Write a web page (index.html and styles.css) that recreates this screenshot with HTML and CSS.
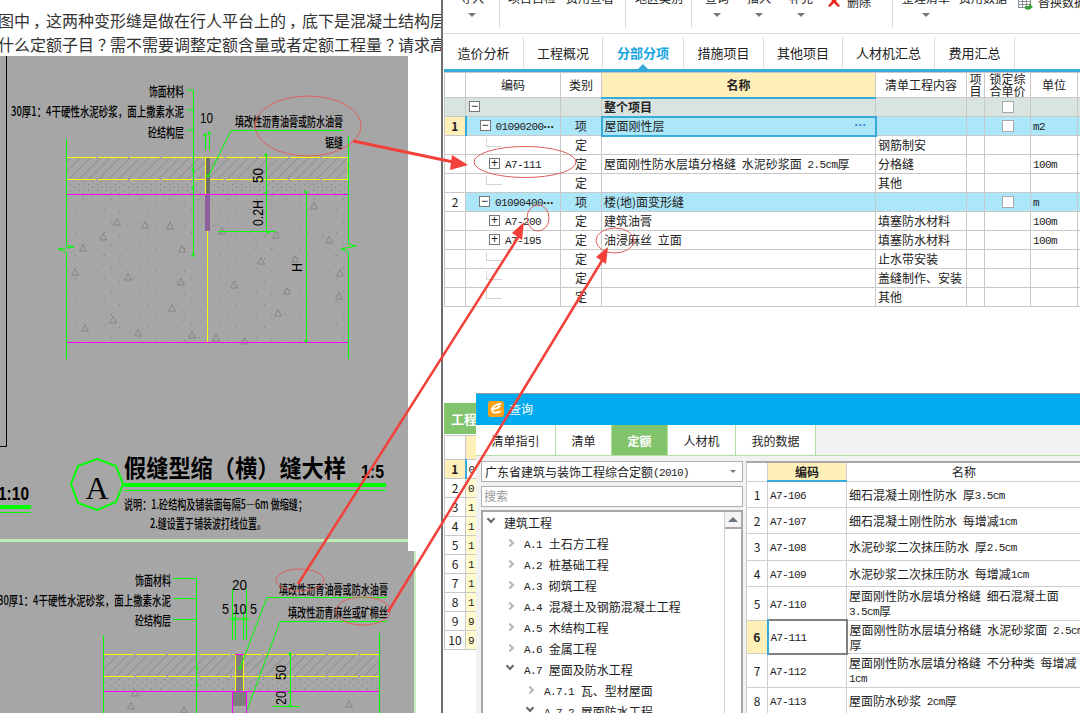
FILE: index.html
```html
<!DOCTYPE html>
<html lang="zh">
<head>
<meta charset="utf-8">
<title>查询</title>
<link rel="stylesheet" href="styles.css">
</head>
<body>
<div class="stage">

  <section class="doc">
    <p class="doc-line">图中<span class="p">，</span>这两种变形缝是做在行人平台上的<span class="p">，</span>底下是混凝土结构层</p>
    <p class="doc-line">什么定额子目<span class="p">？</span>需不需要调整定额含量或者定额工程量<span class="p">？</span>请求高</p>
    <svg class="cad" viewBox="0 56 416 657" width="416" height="657" xmlns="http://www.w3.org/2000/svg">
      <defs>
        <pattern id="hatch" width="7" height="7" patternUnits="userSpaceOnUse" patternTransform="rotate(45)">
          <line x1="0" y1="0" x2="0" y2="7" stroke="#707070" stroke-width="0.8"/>
        </pattern>
        <pattern id="dots" width="29" height="23" patternUnits="userSpaceOnUse">
          <rect x="3" y="5" width="1" height="1" fill="#808080"/>
          <rect x="17" y="2" width="1" height="1" fill="#808080"/>
          <rect x="24" y="15" width="1" height="1" fill="#808080"/>
          <rect x="10" y="18" width="1" height="1" fill="#808080"/>
        </pattern>
        <pattern id="fine" width="9" height="6" patternUnits="userSpaceOnUse">
          <rect x="2" y="1" width="1" height="1" fill="#808080"/>
          <rect x="7" y="4" width="1" height="1" fill="#808080"/>
        </pattern>
        <path id="tri" d="M0 -3.500 L3.500 3 L-3.500 3 Z" fill="none" stroke="#7d7d7d" stroke-width="0.8"/>
      </defs>

      <rect class="cad-bg" x="0" y="56" width="408" height="495"/>
      <rect class="cad-bg" x="0" y="551" width="415" height="162"/>
      <rect x="414" y="551" width="2" height="162" fill="#c4f0c0"/>
      <rect x="0" y="539" width="408" height="3" fill="#bdeeb8"/>
      <path d="M6.500 56 V446.500 H0" fill="none" stroke="#000" stroke-width="1"/>

      <!-- upper detail -->
      <rect x="66" y="158" width="282" height="22" fill="url(#hatch)"/>
      <rect x="66" y="180" width="282" height="14" fill="url(#fine)"/>
      <rect x="67" y="195" width="281" height="147" fill="url(#dots)"/>
      <use href="#tri" x="117" y="222"/><use href="#tri" x="145" y="225"/><use href="#tri" x="170" y="226"/>
      <use href="#tri" x="103" y="237"/><use href="#tri" x="83" y="248"/><use href="#tri" x="182" y="249"/>
      <use href="#tri" x="75" y="272"/><use href="#tri" x="128" y="277"/><use href="#tri" x="181" y="282"/>
      <use href="#tri" x="113" y="320"/><use href="#tri" x="85" y="328"/><use href="#tri" x="138" y="333"/>
      <use href="#tri" x="192" y="335"/><use href="#tri" x="172" y="308"/><use href="#tri" x="234" y="285"/>
      <use href="#tri" x="261" y="261"/><use href="#tri" x="287" y="291"/><use href="#tri" x="278" y="313"/>
      <use href="#tri" x="314" y="206"/><use href="#tri" x="329" y="240"/><use href="#tri" x="340" y="273"/>
      <use href="#tri" x="339" y="296"/><use href="#tri" x="276" y="235"/><use href="#tri" x="222" y="231"/>
      <use href="#tri" x="216" y="338"/><use href="#tri" x="245" y="341"/><use href="#tri" x="295" y="259"/>

      <g class="y">
        <line x1="66" y1="157.500" x2="348" y2="157.500" stroke-dasharray="30 2"/>
        <line x1="66" y1="179.500" x2="348" y2="179.500" stroke-dasharray="30 2"/>
        <line x1="348" y1="157" x2="348" y2="180" stroke-dasharray="6 2"/>
        <line x1="207.500" y1="231" x2="207.500" y2="342"/>
        <line x1="205.500" y1="157" x2="205.500" y2="194"/>
      </g>
      <rect x="206" y="158" width="4" height="36" fill="#6f6f6f"/>
      <rect x="205" y="195" width="5" height="36" fill="#8d5f9c"/>
      <g class="m">
        <line x1="67" y1="194.500" x2="348" y2="194.500"/>
        <line x1="66" y1="342.500" x2="348" y2="342.500"/>
      </g>
      <g class="g">
        <path d="M193.500 90 V255 M187 90 H193 M187 110 H193 M187 130 H193"/>
        <path d="M66.500 139 V245 L74 247 L58 249 L66.500 252 V359"/>
        <path d="M348.500 136 V244 L356 246 L341 249 L348.500 252 V359"/>
        <path d="M205.500 135 V150 M209.500 135 V150"/>
        <path d="M208 177 L231 130.500 H342"/>
        <path d="M266.500 155 V232 M218 231.500 H276 M306.500 192 V342"/>
      </g>
      <g class="gf">
        <circle cx="193" cy="255" r="1.500"/><circle cx="193" cy="170" r="1.500"/><circle cx="193" cy="188" r="1.500"/>
        <circle cx="208" cy="176" r="1.500"/><circle cx="266" cy="155" r="1.500"/><circle cx="266" cy="193" r="1.500"/>
        <circle cx="306" cy="192" r="1.500"/><circle cx="306" cy="341" r="1.500"/><circle cx="268" cy="232" r="1.500"/>
        <circle cx="205" cy="135" r="1.500"/><circle cx="209" cy="133" r="1.500"/>
      </g>
      <g class="cad-t">
        <text x="149" y="96" textLength="35" lengthAdjust="spacingAndGlyphs">饰面材料</text>
        <text x="11" y="116" textLength="173" lengthAdjust="spacingAndGlyphs">30厚1：4干硬性水泥砂浆，面上撒素水泥</text>
        <text x="148" y="137" textLength="36" lengthAdjust="spacingAndGlyphs">砼结构层</text>
        <text x="200" y="123" textLength="13" lengthAdjust="spacingAndGlyphs" class="num">10</text>
        <text x="235" y="126" textLength="108" lengthAdjust="spacingAndGlyphs">填改性沥青油膏或防水油膏</text>
        <text x="325" y="147" textLength="18" lengthAdjust="spacingAndGlyphs">锯缝</text>
        <text x="0" y="0" transform="translate(263,183) rotate(-90)" textLength="15" lengthAdjust="spacingAndGlyphs" class="num">50</text>
        <text x="0" y="0" transform="translate(263,226) rotate(-90)" textLength="26" lengthAdjust="spacingAndGlyphs" class="num">0.2H</text>
        <text x="0" y="0" transform="translate(302,272) rotate(-90)" textLength="9" lengthAdjust="spacingAndGlyphs" class="num">H</text>
      </g>

      <!-- title -->
      <polygon class="hept" points="97,459 116,466 123,484 116,502 97,510 78,503 71,484 78,466"/>
      <text x="97" y="499" class="letter">A</text>
      <text x="124" y="477" textLength="222" lengthAdjust="spacingAndGlyphs" class="title">假缝型缩（横）缝大样</text>
      <text x="361" y="478" textLength="23" lengthAdjust="spacingAndGlyphs" class="scale">1:5</text>
      <text x="-2" y="500" textLength="31" lengthAdjust="spacingAndGlyphs" class="scale">1:10</text>
      <rect x="124" y="483" width="262" height="4" fill="#00ff00"/>
      <rect x="124" y="490" width="262" height="1" fill="#00ff00"/>
      <rect x="0" y="505" width="31" height="4" fill="#00ff00"/>
      <rect x="0" y="512" width="31" height="1" fill="#00ff00"/>
      <g class="cad-t">
        <text x="124" y="509" textLength="183" lengthAdjust="spacingAndGlyphs">说明：1.砼结构及铺装面每隔5—6m 做缩缝；</text>
        <text x="150" y="528" textLength="116" lengthAdjust="spacingAndGlyphs">2.缝设置于铺装波打线位置。</text>
      </g>

      <!-- lower detail -->
      <rect x="104" y="655" width="276" height="21" fill="url(#hatch)"/>
      <rect x="104" y="677" width="276" height="14" fill="url(#fine)"/>
      <use href="#tri" x="131" y="706"/><use href="#tri" x="184" y="710"/><use href="#tri" x="349" y="704"/><use href="#tri" x="135" y="693"/>
      <rect x="236" y="655" width="7" height="36" fill="#7f7f7f"/>
      <rect x="233" y="692" width="13" height="14" fill="#7f7f7f"/>
      <g class="y">
        <line x1="104" y1="654.500" x2="380" y2="654.500" stroke-dasharray="30 2"/>
        <line x1="104" y1="676.500" x2="380" y2="676.500" stroke-dasharray="30 2"/>
        <line x1="235.500" y1="655" x2="235.500" y2="691"/>
        <line x1="243.500" y1="655" x2="243.500" y2="691"/>
      </g>
      <g class="m">
        <line x1="104" y1="691.500" x2="380" y2="691.500"/>
        <line x1="235" y1="654.500" x2="244" y2="654.500"/>
        <line x1="232.500" y1="691" x2="232.500" y2="713"/>
        <line x1="246.500" y1="691" x2="246.500" y2="713"/>
      </g>
      <g class="g">
        <path d="M173 578.500 H196.500 V713 M173 598.500 H196.500 M173 619.500 H196.500"/>
        <path d="M103.500 635 V713 M379.500 633 V713"/>
        <path d="M232.500 589 V640 M235.500 611 V640 M243.500 611 V640 M246.500 589 V640 M229 619 H250"/>
        <path d="M240 668 L267 597.500 H387"/>
        <path d="M247 710 L280 621.500 H387"/>
        <path d="M290.500 653 V706 M273 706.500 H300"/>
      </g>
      <g class="gf">
        <circle cx="197" cy="668" r="1.500"/><circle cx="197" cy="685" r="1.500"/><circle cx="240" cy="668" r="1.500"/>
        <circle cx="290" cy="654" r="1.500"/><circle cx="290" cy="692" r="1.500"/><circle cx="290" cy="706" r="1.500"/>
        <circle cx="234" cy="619" r="1.500"/><circle cx="244" cy="619" r="1.500"/>
      </g>
      <g class="cad-t">
        <text x="135" y="585" textLength="36" lengthAdjust="spacingAndGlyphs">饰面材料</text>
        <text x="-2" y="605" textLength="173" lengthAdjust="spacingAndGlyphs">30厚1：4干硬性水泥砂浆，面上撒素水泥</text>
        <text x="135" y="625" textLength="36" lengthAdjust="spacingAndGlyphs">砼结构层</text>
        <text x="279" y="594" textLength="109" lengthAdjust="spacingAndGlyphs">填改性沥青油膏或防水油膏</text>
        <text x="288" y="617" textLength="100" lengthAdjust="spacingAndGlyphs">填改性沥青麻丝或矿棉丝</text>
        <text x="232" y="590" textLength="15" lengthAdjust="spacingAndGlyphs" class="num">20</text>
        <text x="222" y="614" textLength="35" lengthAdjust="spacingAndGlyphs" class="num">5 10 5</text>
        <text x="0" y="0" transform="translate(286,680) rotate(-90)" textLength="15" lengthAdjust="spacingAndGlyphs" class="num">50</text>
        <text x="0" y="0" transform="translate(286,705) rotate(-90)" textLength="14" lengthAdjust="spacingAndGlyphs" class="num">20</text>
      </g>
    </svg>
  </section>

  <section class="app">
    <div class="toolbar">
      <div class="tgroup g1">
        <div class="tool"><span>导入</span><i class="caret"></i></div>
      </div>
      <div class="tgroup g2">
        <div class="tool"><span>项目自检</span></div>
        <div class="tool"><span>费用查看</span></div>
      </div>
      <div class="tgroup g3">
        <div class="tool"><span>地区类别</span></div>
      </div>
      <div class="tgroup g4">
        <div class="tool"><span>查询</span><i class="caret"></i></div>
        <div class="tool"><span>插入</span><i class="caret"></i></div>
        <div class="tool"><span>补充</span><i class="caret"></i></div>
        <div class="tool row">
          <svg class="ico-del" viewBox="0 0 12 12" width="12" height="12" xmlns="http://www.w3.org/2000/svg"><path d="M1 0 L6 4 L10 0 L12 1 L8 6 L12 11 L10 12 L6 8 L2 12 L0 11 L4 6 L0 1 Z" fill="#e8261c"/></svg>
          <span>删除</span>
        </div>
      </div>
      <div class="tgroup g5">
        <div class="tool"><span>整理清单</span><i class="caret"></i></div>
        <div class="tool"><span>费用数据</span></div>
        <div class="tool row">
          <svg class="ico-rep" viewBox="0 0 16 12" width="16" height="12" xmlns="http://www.w3.org/2000/svg"><path d="M0.500 0.500 H12.500 V9.500 H0.500 Z M0.500 3.500 H12.500 M0.500 6.500 H12.500 M4.500 0.500 V9.500 M8.500 0.500 V9.500" fill="#fff" stroke="#8a8f96"/><path d="M7 11 L7 8 L11 8 L11 5 L15 9 L11 12 Z" fill="#3da33a"/></svg>
          <span>替换数据</span>
        </div>
      </div>
    </div>

    <nav class="tabs">
      <a class="tab t1">造价分析</a>
      <a class="tab t2">工程概况</a>
      <a class="tab t3 on">分部分项</a>
      <a class="tab t4">措施项目</a>
      <a class="tab t5">其他项目</a>
      <a class="tab t6">人材机汇总</a>
      <a class="tab t7">费用汇总</a>
    </nav>

    <table class="grid">
      <colgroup>
        <col class="c-n"><col class="c-code"><col class="c-type"><col class="c-name"><col class="c-qd"><col class="c-xm"><col class="c-lock"><col class="c-unit"><col class="c-more">
      </colgroup>
      <thead>
        <tr class="hd">
          <th></th><th>编码</th><th>类别</th><th class="hl">名称</th><th>清单工程内容</th><th class="tiny">项目</th><th class="tiny">锁定综合单价</th><th>单位</th><th class="tiny"></th>
        </tr>
      </thead>
      <tbody>
        <tr class="total">
          <td></td><td class="code"><b class="box lv0">−</b></td><td></td><td class="bold">整个项目</td><td></td><td></td><td class="c"><i class="chk"></i></td><td></td><td></td>
        </tr>
        <tr class="sec">
          <td class="num cur">1</td><td class="code cursor"><b class="box lv1">−</b><span class="l">01090200</span><em class="dots">···</em></td><td class="c">项</td><td class="edit">屋面刚性层<em class="more">···</em></td><td></td><td></td><td class="c"><i class="chk"></i></td><td><span class="l">m2</span></td><td></td>
        </tr>
        <tr>
          <td></td><td class="code"><i class="tree"></i></td><td class="c">定</td><td></td><td>钢筋制安</td><td></td><td></td><td></td><td></td>
        </tr>
        <tr>
          <td></td><td class="code"><b class="box lv2">+</b><span class="l">A7-111</span></td><td class="c">定</td><td>屋面刚性防水层填分格缝 水泥砂浆面 <span class="l">2.5cm</span>厚</td><td>分格缝</td><td></td><td></td><td><span class="l">100m</span></td><td></td>
        </tr>
        <tr>
          <td></td><td class="code"><i class="tree"></i></td><td class="c">定</td><td></td><td>其他</td><td></td><td></td><td></td><td></td>
        </tr>
        <tr class="sec">
          <td class="num">2</td><td class="code"><b class="box lv1">−</b><span class="l">01090400</span><em class="dots">···</em></td><td class="c">项</td><td>楼(地)面变形缝</td><td></td><td></td><td class="c"><i class="chk"></i></td><td><span class="l">m</span></td><td></td>
        </tr>
        <tr>
          <td></td><td class="code"><b class="box lv2">+</b><span class="l">A7-200</span></td><td class="c">定</td><td>建筑油膏</td><td>填塞防水材料</td><td></td><td></td><td><span class="l">100m</span></td><td></td>
        </tr>
        <tr>
          <td></td><td class="code"><b class="box lv2">+</b><span class="l">A7-195</span></td><td class="c">定</td><td>油浸麻丝 立面</td><td>填塞防水材料</td><td></td><td></td><td><span class="l">100m</span></td><td></td>
        </tr>
        <tr>
          <td></td><td class="code"><i class="tree"></i></td><td class="c">定</td><td></td><td>止水带安装</td><td></td><td></td><td></td><td></td>
        </tr>
        <tr>
          <td></td><td class="code"><i class="tree"></i></td><td class="c">定</td><td></td><td>盖缝制作、安装</td><td></td><td></td><td></td><td></td>
        </tr>
        <tr>
          <td></td><td class="code"><i class="tree"></i></td><td class="c">定</td><td></td><td>其他</td><td></td><td></td><td></td><td></td>
        </tr>
      </tbody>
    </table>

    <div class="lower">
      <div class="lower-tab">工程</div>
      <table class="mini">
        <tr class="mini-h"><td></td><td class="y1"></td></tr>
        <tr><td class="num cur">1</td><td class="cursor2"><span class="l">0</span></td></tr>
        <tr><td>2</td><td class="y2"><span class="l">0</span></td></tr>
        <tr><td>3</td><td class="y2"><span class="l">1</span></td></tr>
        <tr><td>4</td><td class="y2"><span class="l">1</span></td></tr>
        <tr><td>5</td><td class="y2"><span class="l">1</span></td></tr>
        <tr><td>6</td><td class="y2"><span class="l">1:</span></td></tr>
        <tr><td>7</td><td class="y2"><span class="l">1:</span></td></tr>
        <tr><td>8</td><td class="y2"><span class="l">1:</span></td></tr>
        <tr><td>9</td><td class="y2"><span class="l">9!</span></td></tr>
        <tr><td>10</td><td class="y2"><span class="l">9!</span></td></tr>
      </table>
    </div>
  </section>

  <section class="dialog">
    <header class="dlg-title">
      <svg class="logo" viewBox="0 0 16 16" width="16" height="16" xmlns="http://www.w3.org/2000/svg"><rect width="16" height="16" rx="3" fill="#f9a11b"/><path d="M12.500 3 C8 3 4 6 4 9 C4 12 8 12.500 12 10.500 M6 8 C8 8 10 7 11.500 5.500" fill="none" stroke="#fff" stroke-width="1.800" stroke-linecap="round"/></svg>
      <span>查询</span>
    </header>
    <nav class="dtabs">
      <a class="dtab d1">清单指引</a>
      <a class="dtab d2">清单</a>
      <a class="dtab d3 on">定额</a>
      <a class="dtab d4">人材机</a>
      <a class="dtab d5">我的数据</a>
    </nav>
    <div class="dbody">
      <div class="dleft">
        <div class="combo"><span>广东省建筑与装饰工程综合定额<span class="l">(2010)</span></span><i class="caret sm"></i></div>
        <div class="search">搜索</div>
        <div class="treebox">
          <div class="scroll"><div class="scroll-up"><i></i></div></div>
          <ul class="ttree">
            <li class="l0"><i class="chev down"></i>建筑工程</li>
            <li class="l1"><i class="chev"></i><span class="l">A.1</span> 土石方工程</li>
            <li class="l1"><i class="chev"></i><span class="l">A.2</span> 桩基础工程</li>
            <li class="l1"><i class="chev"></i><span class="l">A.3</span> 砌筑工程</li>
            <li class="l1"><i class="chev"></i><span class="l">A.4</span> 混凝土及钢筋混凝土工程</li>
            <li class="l1"><i class="chev"></i><span class="l">A.5</span> 木结构工程</li>
            <li class="l1"><i class="chev"></i><span class="l">A.6</span> 金属工程</li>
            <li class="l1"><i class="chev down"></i><span class="l">A.7</span> 屋面及防水工程</li>
            <li class="l2"><i class="chev"></i><span class="l">A.7.1</span> 瓦、型材屋面</li>
            <li class="l2"><i class="chev down"></i><span class="l">A.7.2</span> 屋面防水工程</li>
          </ul>
        </div>
      </div>
      <table class="qtable">
        <colgroup><col class="q-n"><col class="q-code"><col></colgroup>
        <thead><tr class="q-h"><th></th><th class="hl">编码</th><th class="plain">名称</th></tr></thead>
        <tbody>
          <tr class="r26"><td class="c">1</td><td><span class="l">A7-106</span></td><td>细石混凝土刚性防水 厚<span class="l">3.5cm</span></td></tr>
          <tr class="r26"><td class="c">2</td><td><span class="l">A7-107</span></td><td>细石混凝土刚性防水 每增减<span class="l">1cm</span></td></tr>
          <tr class="r26"><td class="c">3</td><td><span class="l">A7-108</span></td><td>水泥砂浆二次抹压防水 厚<span class="l">2.5cm</span></td></tr>
          <tr class="r26"><td class="c">4</td><td><span class="l">A7-109</span></td><td>水泥砂浆二次抹压防水 每增减<span class="l">1cm</span></td></tr>
          <tr class="r33"><td class="c">5</td><td><span class="l">A7-110</span></td><td>屋面刚性防水层填分格缝 细石混凝土面<br><span class="l">3.5cm</span>厚</td></tr>
          <tr class="r33"><td class="c cur sel-n">6</td><td class="sel"><span class="l">A7-111</span></td><td>屋面刚性防水层填分格缝 水泥砂浆面 <span class="l">2.5cm</span><br>厚</td></tr>
          <tr class="r33"><td class="c">7</td><td><span class="l">A7-112</span></td><td>屋面刚性防水层填分格缝 不分种类 每增减<br><span class="l">1cm</span></td></tr>
          <tr class="r26"><td class="c">8</td><td><span class="l">A7-113</span></td><td>屋面防水砂浆 <span class="l">2cm</span>厚</td></tr>
        </tbody>
      </table>
    </div>
  </section>

  <svg class="marks" viewBox="0 0 1080 713" width="1080" height="713" xmlns="http://www.w3.org/2000/svg">
    <g class="ring">
      <ellipse cx="308" cy="126" rx="53" ry="30"/>
      <ellipse cx="525" cy="162" rx="51" ry="15.500"/>
      <ellipse cx="538" cy="218" rx="11" ry="13"/>
      <ellipse cx="615" cy="240.500" rx="19" ry="12.500"/>
      <ellipse cx="300" cy="580" rx="24" ry="11"/>
      <ellipse cx="363" cy="611" rx="27" ry="14"/>
    </g>
    <g class="arrow">
      <line x1="353" y1="141" x2="458" y2="163" class="a1"/>
      <polygon points="468,165 452,155 450,170"/>
      <line x1="298" y1="584" x2="519" y2="236" class="a2"/>
      <polygon points="524,222 512,233 522,240"/>
      <line x1="388" y1="612" x2="603" y2="259" class="a3"/>
      <polygon points="608,247 596,257 606,264"/>
    </g>
  </svg>
</div>
</body>
</html>
```

FILE: styles.css
```css
* { box-sizing: border-box; }
html, body { margin: 0; padding: 0; background: #fff; }
body { font-family: "Noto Sans CJK SC", "Liberation Sans", sans-serif; color: #222; }
.stage { position: relative; width: 1080px; height: 713px; overflow: hidden; background: #fff; }
.l { font-family: "Liberation Mono", monospace; font-size: 11px; letter-spacing: -0.6px; line-height: 1; vertical-align: 1px; }

/* left document */
.doc { position: absolute; left: 0; top: 0; width: 441px; height: 713px; overflow: hidden; padding-top: 8px; }
.doc-line { margin: 0 0 0 -2px; width: 480px; font-size: 16px; line-height: 24px; height: 24px; color: #333; white-space: nowrap; }
.p { display: inline-block; width: 16px; text-align: center; font-feature-settings: "palt"; }
.cad { display: block; }
.cad-bg { fill: #a6a6a6; }
.y line { stroke: #ffff00; stroke-width: 1; }
.m line { stroke: #ff00ff; stroke-width: 1; }
.g path { fill: none; stroke: #00ff00; stroke-width: 1; }
.gf circle { fill: #00ff00; }
.cad-t text { font-family: "Noto Sans CJK SC", sans-serif; font-size: 13px; fill: #000; font-weight: 500; }
.cad-t text.num { font-family: "Liberation Sans", sans-serif; font-size: 15px; font-weight: 400; }
.hept { fill: none; stroke: #00ff00; stroke-width: 2; }
.letter { font-family: "Liberation Serif", serif; font-size: 32px; text-anchor: middle; fill: #000; }
.title { font-family: "Noto Sans CJK SC", sans-serif; font-size: 24px; font-weight: 700; fill: #000; }
.scale { font-family: "Liberation Sans", sans-serif; font-size: 18px; font-weight: 700; fill: #000; }

/* main app window */
.app { position: absolute; left: 441px; top: 0; width: 639px; height: 713px; background: #fff; border-left: 2px solid #6e6e6e; padding-left: 1px; overflow: hidden; font-size: 12px; }
.toolbar { display: flex; height: 34px; border-bottom: 1px solid #dcdcdc; overflow: hidden; }
.tgroup { display: flex; height: 28px; border-right: 1px solid #d8d8d8; flex: none; }
.g1 { width: 56px; padding-left: 16px; }
.g2 { width: 126px; padding-left: 8px; gap: 10px; }
.g3 { width: 66px; padding-left: 9px; }
.g4 { width: 201px; padding-left: 13px; gap: 18px; }
.g5 { flex: 1; padding-left: 9px; gap: 9px; border-right: 0; }
.tool { display: flex; flex-direction: column; align-items: center; margin-top: -9px; color: #222; line-height: 14px; flex: none; }
.tool.row { flex-direction: row; gap: 6px; align-items: flex-start; margin-top: -5px; }
.g4 .tool.row { margin-left: -3px; gap: 7px; }
.g5 .tool.row { margin-left: 2px; gap: 4px; }
.ico-del { margin-top: 0; }
.ico-rep { margin-top: 3px; margin-right: 0; }
.caret { display: block; width: 0; height: 0; margin-top: 8px; border-left: 4px solid transparent; border-right: 4px solid transparent; border-top: 4px solid #777; }
.tabs { display: flex; height: 38px; padding-top: 3px; border-bottom: 3px solid #37aad9; position: relative; }
.tab { display: flex; align-items: center; justify-content: center; border-right: 1px solid #dcdcdc; height: 31px; font-size: 13px; color: #222; flex: none; }
.t1 { width: 80px; } .t2 { width: 79px; } .t3 { width: 81px; } .t4 { width: 80px; }
.t5 { width: 79px; } .t6 { width: 92px; } .t7 { width: 80px; }
.tab.on { color: #16a4e2; font-weight: 700; position: relative; }
.tab.on::after { content: ""; position: absolute; left: 35px; bottom: -1px; border-left: 5px solid transparent; border-right: 5px solid transparent; border-bottom: 5px solid #37aad9; }

.grid { border-collapse: collapse; table-layout: fixed; width: 676px; font-size: 12px; word-spacing: 3px; }
.c-n { width: 21px; } .c-code { width: 95px; } .c-type { width: 41px; } .c-name { width: 274px; }
.c-qd { width: 91px; } .c-xm { width: 18px; } .c-lock { width: 46px; } .c-unit { width: 47px; } .c-more { width: 43px; }
.grid td, .grid th { border: 1px solid #c8c8c8; padding: 0 2px; height: 19px; line-height: 14px; white-space: nowrap; overflow: hidden; font-weight: 400; color: #222; }
.grid .hd th { height: 24px; text-align: center; background: #fff; }
.grid .hd th.hl { background: #ffefb8; border-bottom: 2px solid #37aad9; font-weight: 700; }
.grid .hd th.tiny { white-space: normal; line-height: 12px; padding: 0; }
.total td { background: #d9e3df; }
.bold { font-weight: 700 !important; }
.sec td { background: #ace6f9; }
.sec td.num { background: #fff; text-align: center; }
.sec td.num.cur { background: #ffefb8; font-weight: 700; border-right: 2px solid #37aad9; }
.grid td.edit { position: relative; border: 2px solid #37aad9; }
.more { position: absolute; right: 8px; top: 0; font-family: "Liberation Sans", sans-serif; font-style: normal; color: #2d7fd0; font-weight: 700; }
.dots { font-family: "Liberation Sans", sans-serif; font-style: normal; font-weight: 700; font-size: 12px; letter-spacing: -0.5px; line-height: 1; }
.c { text-align: center; }
.chk { display: inline-block; width: 12px; height: 12px; background: #fff; border: 1px solid #a8a8a8; vertical-align: top; margin-top: 1px; }
.code { white-space: nowrap; }
.box { display: inline-block; width: 11px; height: 11px; border: 1px solid #777; background: #fff; font-weight: 400; line-height: 8px; text-align: center; font-size: 12px; vertical-align: top; margin-top: 1px; font-family: "Liberation Sans", sans-serif; margin-right: 5px; }
.lv0 { margin-left: 1px; }
.lv1 { margin-left: 11px; }
.lv2 { margin-left: 21px; }
.tree { display: block; width: 16px; height: 9px; margin: -3px 0 3px 18px; border-left: 1px solid #d4d4d4; border-bottom: 1px solid #d4d4d4; }

.lower { position: absolute; left: 1px; top: 403px; width: 40px; }
.lower-tab { width: 40px; height: 31px; background: #82c46c; color: #fff; font-size: 13px; font-weight: 700; line-height: 31px; padding-left: 7px; white-space: nowrap; overflow: hidden; margin-bottom: 1px; }
.mini { border-collapse: collapse; table-layout: fixed; width: 40px; font-size: 12px; }
.mini td { border: 1px solid #c8c8c8; height: 19px; padding: 0; text-align: center; line-height: 12px; overflow: hidden; }
.mini td:first-child { width: 21px; }
.mini td:last-child { text-align: left; padding-left: 2px; }
.mini-h td { height: 24px; }
.mini .y1 { background: #ffefb8; }
.mini .y2 { background: #fffbcc; }
.mini .num.cur { background: #ffefb8; font-weight: 700; }
.mini .cursor2 { background: #fff; border-left: 2px solid #37aad9; }

/* query dialog */
.dialog { position: absolute; left: 476px; top: 393px; width: 606px; height: 320px; background: #f1f1f1; border-top: 1px solid #9a9a9a; font-size: 12px; overflow: hidden; }
.dlg-title { display: flex; align-items: center; gap: 5px; height: 31px; background: #00aaee; padding: 0 0 2px 12px; color: #fff; font-size: 12px; }
.logo { flex: none; }
.dtabs { display: flex; height: 31px; border-bottom: 1px solid #b4dfa3; background: #f1f1f1; }
.dtab { display: flex; align-items: center; justify-content: center; background: #fff; border-right: 1px solid #b4dfa3; flex: none; font-size: 12px; color: #222; }
.d1 { width: 80px; } .d2 { width: 56px; } .d3 { width: 56px; } .d4 { width: 68px; } .d5 { width: 80px; }
.dtab.on { background: #82c46c; color: #fff; font-weight: 700; }
.dbody { display: flex; gap: 3px; padding: 5px 0 0 5px; }
.dleft { width: 262px; flex: none; display: flex; flex-direction: column; gap: 4px; }
.combo { display: flex; justify-content: space-between; align-items: center; height: 21px; line-height: 17px; border: 1px solid #b0b0b0; background: #fff; padding: 0 6px 0 3px; }
.caret.sm { margin: 0; border-left-width: 3px; border-right-width: 3px; border-top-width: 3px; }
.search { height: 21px; border: 1px solid #b0b0b0; background: #fff; color: #999; padding-left: 2px; line-height: 18px; }
.treebox { position: relative; height: 204px; border: 2px solid #a8a8a8; border-bottom: 0; margin-top: -1px; background: #fff; }
.scroll { position: absolute; right: 0; top: 0; bottom: 0; width: 17px; border-left: 1px solid #cfcfcf; background: #fff; }
.scroll-up { height: 17px; border-bottom: 2px solid #a8a8a8; background: #f4f4f4; display: flex; align-items: center; justify-content: center; }
.scroll-up i { width: 0; height: 0; border-left: 5px solid transparent; border-right: 5px solid transparent; border-bottom: 5px solid #6c7480; }
.ttree { list-style: none; margin: 0; padding: 0; word-spacing: 4px; }
.ttree li { position: relative; height: 21px; line-height: 21px; white-space: nowrap; font-size: 12px; color: #222; }
.ttree .l0 { padding-left: 21px; }
.ttree .l1 { padding-left: 41px; }
.ttree .l2 { padding-left: 61px; }
.chev { position: absolute; top: 7px; width: 6px; height: 6px; border-right: 2px solid #b8b8b8; border-top: 2px solid #b8b8b8; transform: rotate(45deg); }
.l0 .chev { left: 5px; }
.l1 .chev { left: 24px; }
.l2 .chev { left: 44px; }
.chev.down { top: 4px; border-color: #666; transform: rotate(135deg); }
.qtable { border-collapse: collapse; table-layout: fixed; width: 336px; background: #fff; border-top: 2px solid #a8a8a8; font-size: 12px; word-spacing: 3px; }
.q-n { width: 21px; } .q-code { width: 79px; }
.qtable td, .qtable th { border: 1px solid #cfcfcf; padding: 0 2px; height: 26px; line-height: 15px; color: #222; white-space: nowrap; overflow: hidden; }
.qtable .q-h th { height: 19px; background: #fff; font-weight: 400; text-align: center; line-height: 14px; }
.qtable .q-h th.hl { background: #ffefb8; font-weight: 700; border-bottom: 2px solid #37aad9; }
.qtable .r33 td { height: 33px; }
.qtable .sel { border: 2px solid #808080; }
.qtable .sel-n { background: #ffefb8; font-weight: 700; border-right: 2px solid #37aad9; }

/* red annotations */
.marks { position: absolute; left: 0; top: 0; pointer-events: none; }
.ring ellipse { fill: none; stroke: #e0605a; stroke-width: 1; }
.arrow line { stroke: #f2413a; }
.arrow polygon { fill: #f2413a; }
.a1 { stroke-width: 3; }
.a2, .a3 { stroke-width: 2.500; }
```
